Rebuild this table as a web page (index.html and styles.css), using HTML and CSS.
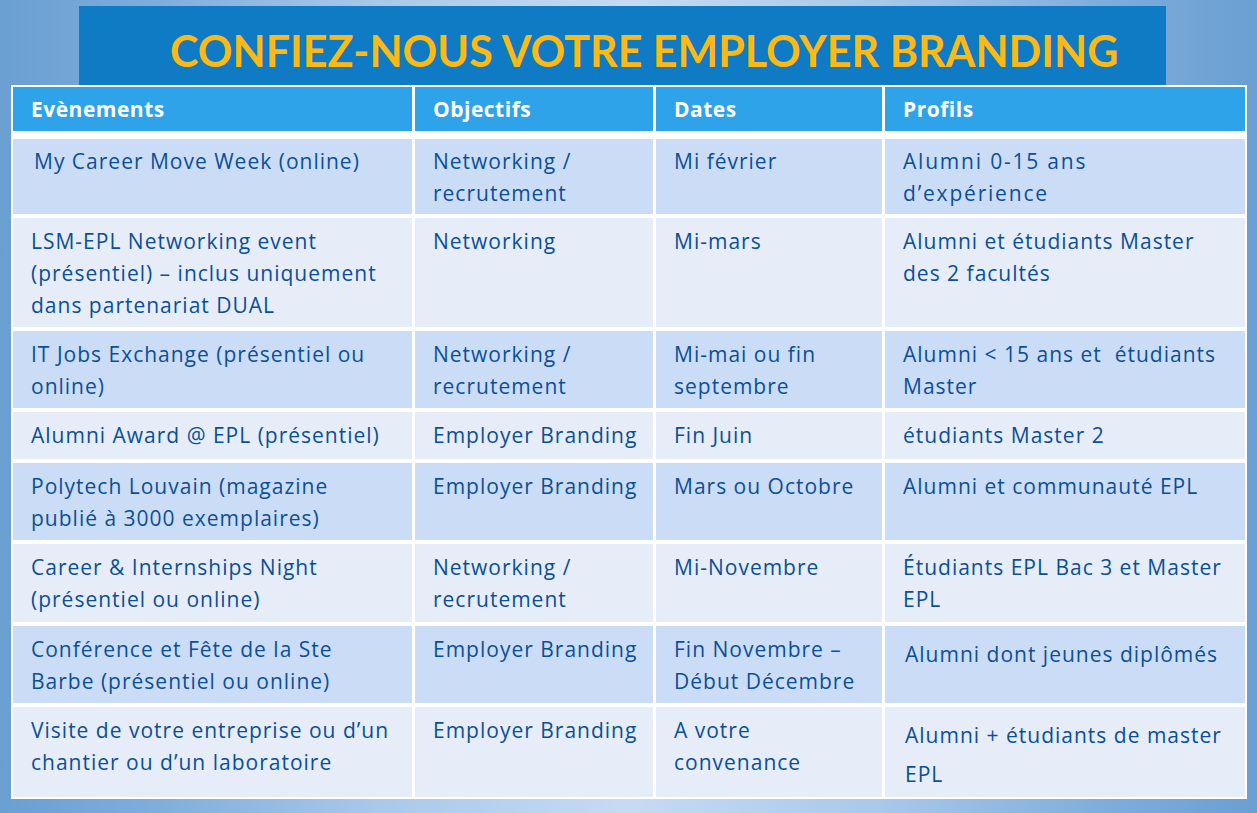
FILE: index.html
```html
<!DOCTYPE html>
<html lang="fr">
<head>
<meta charset="utf-8">
<title>Confiez-nous votre Employer Branding</title>
<link rel="stylesheet" href="styles.css">
</head>
<body>
<div class="page">
  <div class="banner"><h1 class="title">CONFIEZ-NOUS VOTRE EMPLOYER BRANDING</h1></div>
  <div class="table">
    <div class="row head">
      <div class="cell">Evènements</div>
      <div class="cell">Objectifs</div>
      <div class="cell">Dates</div>
      <div class="cell">Profils</div>
    </div>
    <div class="row dark r1">
      <div class="cell indent">My Career Move Week (online)</div>
      <div class="cell">Networking /<br>recrutement</div>
      <div class="cell">Mi février</div>
      <div class="cell spaced">Alumni 0-15 ans<br>d’expérience</div>
    </div>
    <div class="row light r2">
      <div class="cell">LSM-EPL Networking event<br>(présentiel) – inclus uniquement<br>dans partenariat DUAL</div>
      <div class="cell">Networking</div>
      <div class="cell">Mi-mars</div>
      <div class="cell">Alumni et étudiants Master<br>des 2 facultés</div>
    </div>
    <div class="row dark r3">
      <div class="cell">IT Jobs Exchange (présentiel ou<br>online)</div>
      <div class="cell">Networking /<br>recrutement</div>
      <div class="cell">Mi-mai ou fin<br>septembre</div>
      <div class="cell">Alumni &lt; 15 ans et&nbsp; étudiants<br>Master</div>
    </div>
    <div class="row light r4">
      <div class="cell">Alumni Award @ EPL (présentiel)</div>
      <div class="cell">Employer Branding</div>
      <div class="cell">Fin Juin</div>
      <div class="cell">étudiants Master 2</div>
    </div>
    <div class="row dark r5">
      <div class="cell">Polytech Louvain (magazine<br>publié à 3000 exemplaires)</div>
      <div class="cell">Employer Branding</div>
      <div class="cell">Mars ou Octobre</div>
      <div class="cell">Alumni et communauté EPL</div>
    </div>
    <div class="row light r6">
      <div class="cell">Career &amp; Internships Night<br>(présentiel ou online)</div>
      <div class="cell">Networking /<br>recrutement</div>
      <div class="cell">Mi-Novembre</div>
      <div class="cell">Étudiants EPL Bac 3 et Master<br>EPL</div>
    </div>
    <div class="row dark r7">
      <div class="cell">Conférence et Fête de la Ste<br>Barbe (présentiel ou online)</div>
      <div class="cell">Employer Branding</div>
      <div class="cell">Fin Novembre –<br>Début Décembre</div>
      <div class="cell lower">Alumni dont jeunes diplômés</div>
    </div>
    <div class="row light r8">
      <div class="cell">Visite de votre entreprise ou d’un<br>chantier ou d’un laboratoire</div>
      <div class="cell">Employer Branding</div>
      <div class="cell">A votre<br>convenance</div>
      <div class="cell lower tall">Alumni + étudiants de master<br>EPL</div>
    </div>
  </div>
</div>
</body>
</html>
```

FILE: styles.css
```css
html, body {
  margin: 0;
  padding: 0;
}
body {
  width: 1257px;
  height: 813px;
  overflow: hidden;
  background: linear-gradient(90deg, #6a9fd2 0%, #7eaddb 12%, #a9c8ea 30%, #c6dbf3 50%, #a9c8ea 70%, #7eaddb 88%, #6a9fd2 100%);
  font-family: "Open Sans", Lato, sans-serif;
}
.page {
  padding-top: 6px;
}
.banner {
  margin-left: 79px;
  width: 1087px;
  height: 79px;
  background: #0e7bc4;
  box-sizing: border-box;
  padding-left: 91px;
  padding-top: 10px;
  display: flex;
  align-items: center;
}
.title {
  margin: 0;
  color: #fdb913;
  font-family: Lato, "Open Sans", sans-serif;
  font-weight: bold;
  font-size: 43px;
  letter-spacing: 0;
  line-height: 1;
  white-space: nowrap;
}
.table {
  margin-left: 11px;
  width: 1236px;
  box-sizing: border-box;
  background: #ffffff;
  padding: 2px;
  display: flex;
  flex-direction: column;
  gap: 4px;
}
.row {
  display: grid;
  grid-template-columns: 399px 238px 226px 360px;
  column-gap: 3px;
}
.cell {
  box-sizing: border-box;
  padding: 7px 0 0 18px;
  font-size: 21px;
  line-height: 32px;
  letter-spacing: 1px;
  color: #0b4f96;
  white-space: nowrap;
  overflow: hidden;
}
.head {
  height: 44px;
  margin-bottom: 4px;
}
.head .cell {
  background: #2ea3ea;
  color: #ffffff;
  font-weight: bold;
  letter-spacing: 0.5px;
  padding-top: 6px;
}
.dark .cell { background: #cbddf6; }
.light .cell { background: #e6edf9; }
.r1 { height: 75px; }
.r2 { height: 109px; }
.r3 { height: 77px; }
.r4 { height: 47px; }
.r5 { height: 77px; }
.r6 { height: 78px; }
.r7 { height: 77px; }
.r8 { height: 90px; }
.r1 .cell { padding-top: 6px; }
.indent { padding-left: 21px; }
.r1 .spaced { letter-spacing: 1.8px; }
.lower { padding-top: 12px; padding-left: 20px; }
.r8 .lower { padding-top: 9px; }
.tall { line-height: 39px; }
```
